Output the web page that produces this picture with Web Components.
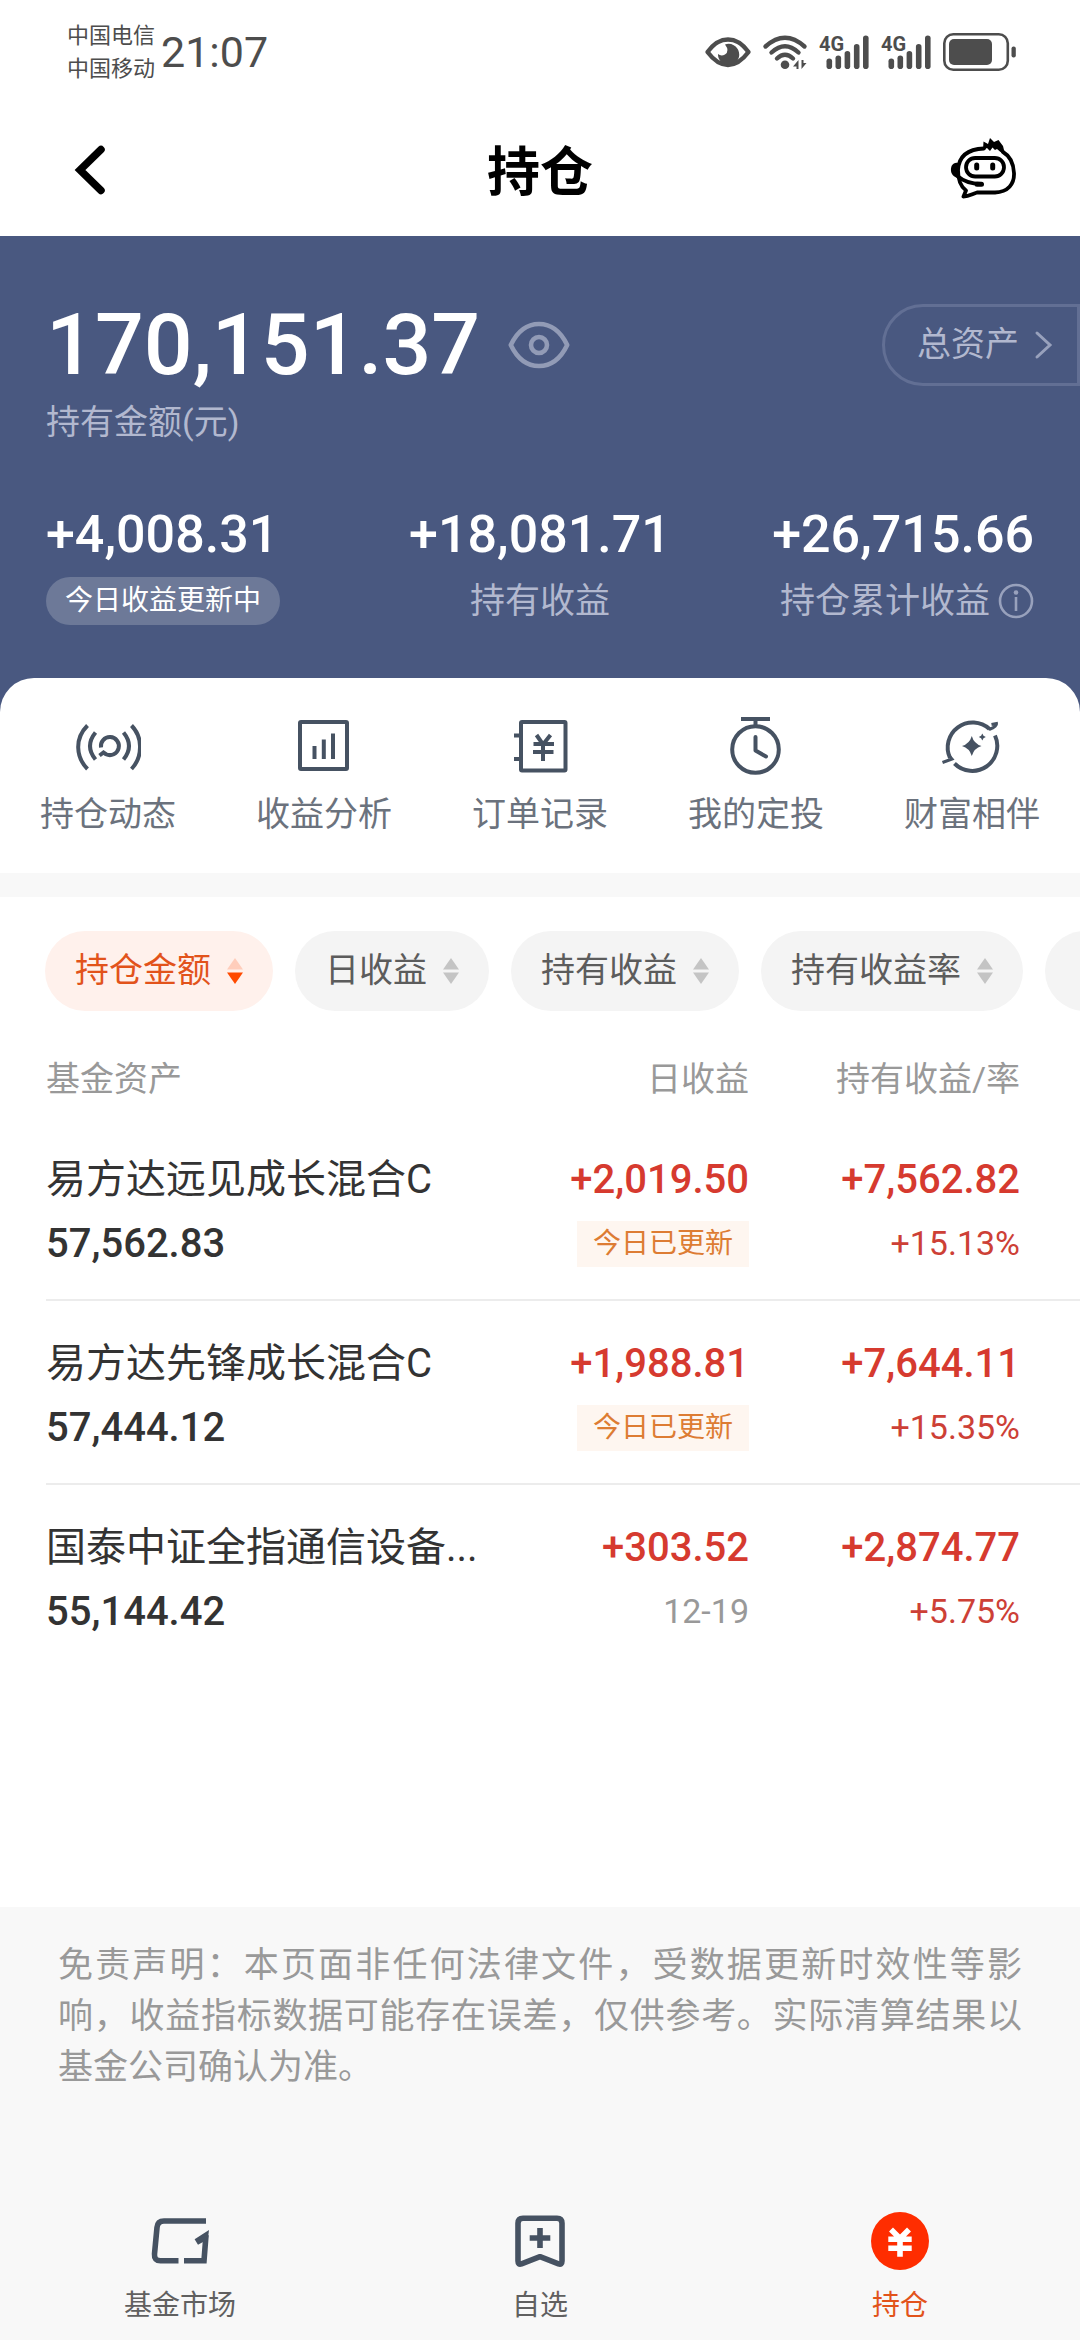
<!DOCTYPE html>
<html lang="zh-CN">
<head>
<meta charset="UTF-8">
<meta name="viewport" content="width=device-width, initial-scale=1">
<title>持仓</title>
<style>
  :root {
    --hero: #495880;
    --hero-muted: #b2b8cf;
    --ink: #333;
    --slate: #465262;
    --grey: #999;
    --red: #d63a2f;
    --surface: #f8f8f8;
  }
  body {
    margin: 0;
    min-height: 100vh;
    display: flex;
    flex-direction: column;
    background: #fff;
    color: var(--ink);
    font-family: Roboto, "Noto Sans CJK SC", sans-serif;
    font-size: 34px;
    line-height: 1.4;
    overflow-x: hidden;
  }
  main { display: contents; }
  holdings-table { flex: 1; }
</style>
</head>
<body>
  <status-bar time="21:07">
    <span>中国电信</span>
    <span>中国移动</span>
  </status-bar>
  <app-header>持仓</app-header>
  <main>
    <asset-summary total="170,151.37">
      <asset-stat value="+4,008.31" badge>今日收益更新中</asset-stat>
      <asset-stat value="+18,081.71">持有收益</asset-stat>
      <asset-stat value="+26,715.66" info>持仓累计收益</asset-stat>
    </asset-summary>

    <quick-nav>
      <quick-link>
        <svg slot="icon" width="66" height="60" viewBox="0 0 66 60" fill="none" stroke="currentColor" stroke-width="4">
          <path d="M12.500 9.500Q3 19 3.200 31.500Q3.500 44 12.500 53"/>
          <path d="M20.500 16.500Q9.500 30 20.500 43.500"/>
          <path d="M56.500 9.500Q65.500 19 65 31.500Q65 44 56.500 53"/>
          <path d="M48.500 16.500Q59.500 30 48.500 43.500"/>
          <path d="M26 31.500A9 9 0 1 1 31 38.200L28.500 36.500L24.500 39.500"/>
        </svg>持仓动态</quick-link>
      <quick-link>
        <svg slot="icon" width="66" height="60" viewBox="0 0 66 60" fill="none" stroke="currentColor" stroke-width="4">
          <rect x="9" y="6" width="47" height="47" rx="1"/>
          <path d="M23.500 30V43M32.800 23.500V43M42 17.500V43"/>
        </svg>收益分析</quick-link>
      <quick-link>
        <svg slot="icon" width="66" height="60" viewBox="0 0 66 60" fill="none" stroke="currentColor" stroke-width="4">
          <rect x="14" y="6" width="44.500" height="48.500" rx="1"/>
          <path d="M7 19.500H14M7 43H14"/>
          <path d="M29.500 19L36 28.500L43.500 19M26.500 28H47M26 36H46.500M36 28V45"/>
        </svg>订单记录</quick-link>
      <quick-link>
        <svg slot="icon" width="66" height="60" viewBox="0 0 66 60" fill="none" stroke="currentColor" stroke-width="4">
          <circle cx="32.500" cy="33.500" r="23.300"/>
          <path d="M18 3H47M32.500 3V10"/>
          <path d="M32.500 21V34.500L43 40.500" stroke-linecap="round" stroke-linejoin="round"/>
        </svg>我的定投</quick-link>
      <quick-link>
        <svg slot="icon" width="66" height="60" viewBox="0 0 66 60" fill="none" stroke="currentColor" stroke-width="4">
          <path d="M50.500 13A25 25 0 0 0 11 42"/>
          <path d="M56 19.500A25 25 0 0 1 15.500 47.500"/>
          <path d="M10 39.500L13 43L3.500 46.500M50 13.500C54 12 58 10 57.500 7.500L52.500 8.500" stroke-width="3"/>
          <path d="M32.800 20Q35 27.800 42.500 30Q35 32.200 32.800 40Q30.500 32.200 23 30Q30.500 27.800 32.800 20ZM43.300 17.500L44.500 19.800L46.800 21L44.500 22.200L43.300 24.500L42.100 22.200L39.800 21L42.100 19.800Z" fill="currentColor" stroke="none"/>
        </svg>财富相伴</quick-link>
    </quick-nav>

    <sort-chips>
      <sort-chip active>持仓金额</sort-chip>
      <sort-chip>日收益</sort-chip>
      <sort-chip>持有收益</sort-chip>
      <sort-chip>持有收益率</sort-chip>
      <sort-chip>日收益率</sort-chip>
    </sort-chips>

    <holdings-table></holdings-table>

    <disclaimer-note>免责声明：本页面非任何法律文件，受数据更新时效性等影响，收益指标数据可能存在误差，仅供参考。实际清算结果以基金公司确认为准。</disclaimer-note>
  </main>

  <tab-bar>
    <tab-item>
      <svg slot="icon" width="60" height="60" viewBox="0 0 60 60" fill="none" stroke="currentColor" stroke-width="5.600">
        <path d="M56 10H14Q7.500 10 7 16.500L4.500 43Q4 49.700 10.500 49.700H28.500M34 49.700H54L56 24"/>
        <path d="M59 19L44.600 28.300L48 33.700L53 31L57.500 31Z" fill="currentColor" stroke="none"/>
      </svg>基金市场</tab-item>
    <tab-item>
      <svg slot="icon" width="60" height="60" viewBox="0 0 60 60" fill="none" stroke="currentColor" stroke-width="5.600" stroke-linejoin="round">
        <path d="M13 7.300H47Q52 7.300 52 12.300V50Q52 54 48.500 52.800L30 45.700L11.500 52.800Q8 54 8 50V12.300Q8 7.300 13 7.300Z"/>
        <path d="M30 17V37M19.700 27H40.300"/>
      </svg>自选</tab-item>
    <tab-item active>
      <svg slot="icon" width="60" height="60" viewBox="0 0 60 60" fill="none" stroke="#fff" stroke-width="5.600">
        <circle cx="30" cy="30" r="29" fill="#ff2d00" stroke="none"/>
        <path d="M21 18.500L30 27.500L39 18.500M18.300 28.300H41.700M18.300 37.300H41.700M30 27V45.700"/>
      </svg>持仓</tab-item>
  </tab-bar>

<script>
class StatusBar extends HTMLElement {
  connectedCallback() {
    const signal = `
      <svg width="50" height="34" viewBox="0 0 50 34" fill="currentColor">
        <text x="0" y="16" font-size="20" font-weight="700">4G</text>
        <rect x="7.500" y="23.500" width="5.600" height="10.500" rx="2.800"/>
        <rect x="16.500" y="20.500" width="5.600" height="13.500" rx="2.800"/>
        <rect x="25.600" y="16" width="5.600" height="18" rx="2.800"/>
        <rect x="34.900" y="9" width="5.600" height="25" rx="2.800"/>
        <rect x="44" y="0.500" width="5.600" height="33.500" rx="2.800"/>
      </svg>`;
    this.attachShadow({ mode: 'open' });
    this.shadowRoot.innerHTML = `
      <style>
        :host {
          display: flex;
          align-items: center;
          height: 104px;
          padding: 0 64px 0 67px;
          color: #4d4d4d;
        }
        .carriers {
          display: flex;
          flex-direction: column;
          font-size: 22px;
          line-height: 33px;
        }
        time {
          margin-left: 6px;
          font-size: 43px;
        }
        .icons {
          display: flex;
          align-items: center;
          gap: 12px;
          margin-left: auto;
        }
        svg { display: block; overflow: visible; }
      </style>

      <div class="carriers"><slot></slot></div>
      <time>${this.getAttribute('time')}</time>
      <div class="icons">
        <svg width="46" height="32" viewBox="0 0 46 32">
          <path d="M2.500 16C10 6 16 3.500 23 3.500S36 6 43.500 16C36 26 30 29 23 29S10 26 2.500 16Z" fill="none" stroke="currentColor" stroke-width="4.400" stroke-linejoin="round"/>
          <path d="M20 8.500A10.600 10.600 0 1 1 13 18Q16 20.500 20 18.500Q25 15 20 8.500Z" fill="currentColor"/>
        </svg>
        <svg width="44" height="34" viewBox="0 0 44 34" fill="none" stroke="currentColor" stroke-width="4.400" stroke-linecap="round">
          <path d="M2.500 11.500Q22 -6 41.500 11.500"/>
          <path d="M8.500 17.500Q22 5 35.500 17.500"/>
          <path d="M14 23.500Q22 16 30 23.500"/>
          <circle cx="22" cy="29.700" r="4.300" fill="currentColor" stroke="none"/>
          <path d="M35.500 25V34H33.500V31.500H30ZM38.500 34V25H40.500V28H43.500Z" fill="currentColor" stroke="none"/>
        </svg>
        ${signal}
        ${signal}
        <svg width="73" height="38" viewBox="0 0 73 38">
          <rect x="1.300" y="1.300" width="63.500" height="35.400" rx="9" fill="none" stroke="currentColor" stroke-width="2.600"/>
          <rect x="6" y="6" width="43" height="26" rx="5" fill="currentColor"/>
          <rect x="68.500" y="13.500" width="4.300" height="11" rx="2" fill="currentColor"/>
        </svg>
      </div>
    `;
  }
}

class AppHeader extends HTMLElement {
  connectedCallback() {
    this.attachShadow({ mode: 'open' });
    this.shadowRoot.innerHTML = `
      <style>
        :host {
          display: grid;
          grid-template-columns: 1fr auto 1fr;
          align-items: center;
          height: 132px;
          padding: 0 64px;
          color: #000;
        }
        h1 {
          margin: 0;
          padding-top: 6px;
          font-size: 53px;
          line-height: 72px;
          font-weight: 700;
        }
        button {
          padding: 0;
          border: 0;
          background: none;
          color: inherit;
        }
        .help { justify-self: end; }
        .back { justify-self: start; }
        svg { display: block; }
      </style>

      <button class="back" aria-label="返回">
        <svg width="48" height="52" viewBox="0 0 48 52" fill="none" stroke="currentColor" stroke-width="7.500" stroke-linecap="round">
          <path d="M37 5.500L16 26L37 46.500"/>
        </svg>
      </button>
      <h1><slot></slot></h1>
      <button class="help" aria-label="客服">
        <svg width="66" height="64" viewBox="0 0 66 64" fill="none" stroke="currentColor" stroke-width="3.800" stroke-linejoin="round" stroke-linecap="round">
          <path d="M34 10.500C20 11 9 16 8 32C8 42 10 48 16 52.500L13.500 58.500C19 58.500 22 56 27 54.500H45C58 54 64.500 46 64 35C63.500 25 60 18 53 14"/>
          <path d="M33 12L33.500 3.500L38 6L40 0L44 4L48.500 2L53 8L55 16L50.500 14L47 11L45 12L42.500 9.500L40 13L37 10Z" fill="currentColor" stroke="none"/>
          <path d="M8 25C3 24 0.500 28 1 33C1.500 37 5 40 9 40Z" fill="currentColor" stroke="none"/>
          <rect x="16" y="20" width="38" height="18.500" rx="9.200"/>
          <path d="M8 38.500Q16 45.500 31 46"/>
          <path d="M27 46.200H31.500" stroke-width="5"/>
          <path d="M26.700 27V30M42.700 27V30" stroke-width="5"/>
        </svg>
      </button>
    `;
  }
}

class AssetSummary extends HTMLElement {
  connectedCallback() {
    this.attachShadow({ mode: 'open' });
    this.shadowRoot.innerHTML = `
      <style>
        :host {
          display: block;
          padding: 68px 0 53px 46px;
          background: var(--hero);
          color: #fff;
        }
        .top {
          display: flex;
          align-items: center;
        }
        .total {
          font-size: 86px;
          line-height: 82px;
          font-weight: 500;
        }
        button {
          padding: 0;
          border: 0;
          background: none;
          color: #929bb6;
        }
        .toggle { margin-left: 28px; }
        .all {
          display: flex;
          align-items: center;
          gap: 14px;
          box-sizing: border-box;
          height: 82px;
          margin-left: auto;
          padding: 0 24px 0 32px;
          border: 3px solid #626f94;
          border-radius: 41px 0 0 41px;
          color: var(--hero-muted);
          text-decoration: none;
        }
        .caption {
          margin: 12px 0 59px;
          line-height: 48px;
          color: var(--hero-muted);
        }
        .stats {
          display: grid;
          grid-template-columns: repeat(3, 1fr);
          padding-right: 46px;
        }
        ::slotted(:nth-child(1)) { justify-self: start; }
        ::slotted(:nth-child(2)) { justify-self: center; text-align: center; }
        ::slotted(:nth-child(3)) { justify-self: end; text-align: right; }
        svg { display: block; }
      </style>

      <div class="top">
        <span class="total">${this.getAttribute('total')}</span>
        <button class="toggle" aria-label="隐藏金额">
          <svg width="62" height="48" viewBox="0 0 62 48" fill="none" stroke="currentColor" stroke-width="4.600">
            <path d="M2.800 24C10 9 20 3 31 3S52 9 59.200 24C52 39 42 45 31 45S10 39 2.800 24Z" stroke-linejoin="round"/>
            <circle cx="31" cy="24" r="8"/>
          </svg>
        </button>
        <a class="all" href="#assets">总资产
          <svg width="20" height="30" viewBox="0 0 20 30" fill="none" stroke="#98a1bc" stroke-width="3" stroke-linecap="round">
            <path d="M4 3L17 15L4 27"/>
          </svg>
        </a>
      </div>
      <p class="caption">持有金额(元)</p>
      <div class="stats"><slot></slot></div>
    `;
  }
}

class AssetStat extends HTMLElement {
  connectedCallback() {
    const info = `
      <svg width="36" height="36" viewBox="0 0 36 36" fill="none" stroke="#98a1bc" stroke-width="2.600">
        <circle cx="18" cy="18" r="16"/>
        <path d="M18 14V28"/>
        <circle cx="18" cy="9.500" r="2.300" fill="#98a1bc" stroke="none"/>
      </svg>`;
    this.attachShadow({ mode: 'open' });
    this.shadowRoot.innerHTML = `
      <style>
        :host { display: block; }
        .value {
          font-size: 52px;
          line-height: 60px;
          font-weight: 500;
        }
        .label {
          display: inline-flex;
          align-items: center;
          gap: 8px;
          height: 48px;
          margin-top: 12px;
          color: var(--hero-muted);
          font-size: 35px;
          vertical-align: top;
        }
        :host([badge]) .label {
          padding: 0 19px;
          border-radius: 24px;
          background: #6d7998;
          color: #fff;
          font-size: 28px;
        }
      </style>

      <div class="value">${this.getAttribute('value')}</div>
      <div class="label"><slot></slot>${this.hasAttribute('info') ? info : ''}</div>
    `;
  }
}

class QuickNav extends HTMLElement {
  connectedCallback() {
    this.attachShadow({ mode: 'open' });
    this.shadowRoot.innerHTML = `
      <style>
        :host {
          display: block;
          background: var(--hero);
        }
        nav {
          display: grid;
          grid-template-columns: repeat(5, 1fr);
          padding: 38px 0 37px;
          border-radius: 34px 34px 0 0;
          background: #fff;
        }
        .gap {
          height: 24px;
          background: var(--surface);
        }
      </style>

      <nav><slot></slot></nav>
      <div class="gap"></div>
    `;
  }
}

class QuickLink extends HTMLElement {
  connectedCallback() {
    this.attachShadow({ mode: 'open' });
    this.shadowRoot.innerHTML = `
      <style>
        :host { display: block; }
        a {
          display: flex;
          flex-direction: column;
          align-items: center;
          gap: 16px;
          color: #6b727d;
          line-height: 44px;
          text-decoration: none;
        }
        ::slotted(svg) {
          display: block;
          color: var(--slate);
        }
      </style>

      <a href="#"><slot name="icon"></slot><span><slot></slot></span></a>
    `;
  }
}

class SortChips extends HTMLElement {
  connectedCallback() {
    this.attachShadow({ mode: 'open' });
    this.shadowRoot.innerHTML = `
      <style>
        :host {
          display: flex;
          gap: 22px;
          padding: 34px 0 32px 45px;
          overflow: hidden;
        }
      </style>

      <slot></slot>
    `;
  }
}

class SortChip extends HTMLElement {
  connectedCallback() {
    const active = this.hasAttribute('active');
    const up = active ? '#ffcdbb' : '#c4c4c4';
    const down = active ? '#ff4a00' : '#c4c4c4';
    this.attachShadow({ mode: 'open' });
    this.shadowRoot.innerHTML = `
      <style>
        :host { flex: none; }
        button {
          display: flex;
          align-items: center;
          gap: 16px;
          height: 80px;
          padding: 0 30px;
          border: 0;
          border-radius: 40px;
          background: #f4f4f4;
          color: #5c5c5c;
          font: inherit;
          white-space: nowrap;
        }
        :host([active]) button {
          background: #fff1ec;
          color: #e2531b;
        }
      </style>

      <button aria-pressed="${active}">
        <slot></slot>
        <svg width="16" height="26" viewBox="0 0 16 26">
          <path d="M8 0L16 11.500H0Z" fill="${up}"/>
          <path d="M8 26L16 14.500H0Z" fill="${down}"/>
        </svg>
      </button>
    `;
  }
}

const holdings = [
  { name: '易方达远见成长混合C', amount: '57,562.83', day: '+2,019.50', updated: true, note: '今日已更新', gain: '+7,562.82', rate: '+15.13%' },
  { name: '易方达先锋成长混合C', amount: '57,444.12', day: '+1,988.81', updated: true, note: '今日已更新', gain: '+7,644.11', rate: '+15.35%' },
  { name: '国泰中证全指通信设备...', amount: '55,144.42', day: '+303.52', updated: false, note: '12-19', gain: '+2,874.77', rate: '+5.75%' },
];

class HoldingsTable extends HTMLElement {
  connectedCallback() {
    this.attachShadow({ mode: 'open' });
    this.shadowRoot.innerHTML = `
      <style>
        :host {
          display: block;
          padding-left: 46px;
        }
        table {
          width: 100%;
          border-collapse: separate;
          border-spacing: 0;
          table-layout: fixed;
        }
        th {
          height: 74px;
          padding: 0;
          color: var(--grey);
          font-weight: 400;
          text-align: right;
        }
        th:first-child { text-align: left; }
        th:nth-child(2) { width: 252px; }
        th:nth-child(3) { width: 271px; padding-right: 60px; }
        td {
          padding: 31px 0 23px;
          border-bottom: 2px solid #ececec;
        }
        td:nth-child(3) { padding-right: 60px; }
        tr:last-child td { border-bottom: 0; }
        .line {
          display: flex;
          align-items: center;
          height: 64px;
          white-space: nowrap;
          font-size: 40px;
        }
        .num { font-weight: 500; }
        td + td .line { justify-content: flex-end; }
        td + td .num { color: var(--red); }
        .line.small { font-size: 34px; }
        .rate { color: #cd4036; }
        .date { color: var(--grey); }
        .tag {
          padding: 0 16px;
          background: #fef6f0;
          color: #dd7c33;
          font-size: 28px;
          line-height: 46px;
        }
      </style>

      <table>
        <thead>
          <tr><th scope="col">基金资产</th><th scope="col">日收益</th><th scope="col">持有收益/率</th></tr>
        </thead>
        <tbody>
          ${holdings.map(h => `
            <tr>
              <td>
                <div class="line">${h.name}</div>
                <div class="line num">${h.amount}</div>
              </td>
              <td>
                <div class="line num">${h.day}</div>
                <div class="line small"><span class="${h.updated ? 'tag' : 'date'}">${h.note}</span></div>
              </td>
              <td>
                <div class="line num">${h.gain}</div>
                <div class="line small rate">${h.rate}</div>
              </td>
            </tr>`).join('')}
        </tbody>
      </table>
    `;
  }
}

class DisclaimerNote extends HTMLElement {
  connectedCallback() {
    this.attachShadow({ mode: 'open' });
    this.shadowRoot.innerHTML = `
      <style>
        :host {
          display: block;
          padding: 33px 58px 97px;
          background: var(--surface);
          color: var(--grey);
          font-size: 35px;
        }
        p {
          margin: 0;
          line-height: 51px;
          text-align: justify;
        }
      </style>

      <p><slot></slot></p>
    `;
  }
}

class TabBar extends HTMLElement {
  connectedCallback() {
    this.attachShadow({ mode: 'open' });
    this.shadowRoot.innerHTML = `
      <style>
        :host {
          display: block;
          background: var(--surface);
        }
        nav {
          display: grid;
          grid-template-columns: repeat(3, 1fr);
          padding: 21px 0 14px;
        }
      </style>

      <nav><slot></slot></nav>
    `;
  }
}

class TabItem extends HTMLElement {
  connectedCallback() {
    this.attachShadow({ mode: 'open' });
    this.shadowRoot.innerHTML = `
      <style>
        :host { display: block; }
        a {
          display: flex;
          flex-direction: column;
          align-items: center;
          gap: 15px;
          color: #606060;
          font-size: 28px;
          line-height: 40px;
          text-decoration: none;
        }
        :host([active]) a { color: #e2531b; }
        ::slotted(svg) {
          display: block;
          color: var(--slate);
        }
      </style>

      <a href="#"><slot name="icon"></slot><span><slot></slot></span></a>
    `;
  }
}

customElements.define('status-bar', StatusBar);
customElements.define('app-header', AppHeader);
customElements.define('asset-summary', AssetSummary);
customElements.define('asset-stat', AssetStat);
customElements.define('quick-nav', QuickNav);
customElements.define('quick-link', QuickLink);
customElements.define('sort-chips', SortChips);
customElements.define('sort-chip', SortChip);
customElements.define('holdings-table', HoldingsTable);
customElements.define('disclaimer-note', DisclaimerNote);
customElements.define('tab-bar', TabBar);
customElements.define('tab-item', TabItem);
</script>
</body>
</html>
